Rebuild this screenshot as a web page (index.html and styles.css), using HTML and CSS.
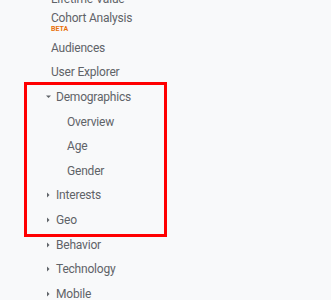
FILE: index.html
```html
<!DOCTYPE html>
<html lang="en">
<head>
  <meta charset="UTF-8" />
  <title>Audience Menu</title>
  <link rel="stylesheet" href="styles.css">
</head>
<body>
<nav class="side-nav">
  <div class="item">Lifetime Value</div>
  <div class="item item-beta">
    <span class="label">Cohort Analysis</span>
    <span class="beta">BETA</span>
  </div>
  <div class="item">Audiences</div>
  <div class="item">User Explorer</div>

  <div class="group highlight">
    <div class="item parent">
      <svg class="arrow" width="10" height="10" viewBox="0 0 10 10"><polygon points="0,3.5 5,3.5 2.5,6" /></svg>
      Demographics
    </div>
    <div class="item child">Overview</div>
    <div class="item child">Age</div>
    <div class="item child">Gender</div>
    <div class="item parent">
      <svg class="arrow" width="10" height="10" viewBox="0 0 10 10"><polygon points="1,2.5 3.5,5 1,7.5" /></svg>
      Interests
    </div>
    <div class="item parent">
      <svg class="arrow" width="10" height="10" viewBox="0 0 10 10"><polygon points="1,2.5 3.5,5 1,7.5" /></svg>
      Geo
    </div>
  </div>

  <div class="item parent">
    <svg class="arrow" width="10" height="10" viewBox="0 0 10 10"><polygon points="1,2.5 3.5,5 1,7.5" /></svg>
    Behavior
  </div>
  <div class="item parent">
    <svg class="arrow" width="10" height="10" viewBox="0 0 10 10"><polygon points="1,2.5 3.5,5 1,7.5" /></svg>
    Technology
  </div>
  <div class="item parent">
    <svg class="arrow" width="10" height="10" viewBox="0 0 10 10"><polygon points="1,2.5 3.5,5 1,7.5" /></svg>
    Mobile
  </div>
</nav>
</body>
</html>
```

FILE: styles.css
```css
html, body {
  margin: 0;
  padding: 0;
  height: 100%;
  overflow: hidden;
  background: #f8f9fa;
  font-family: Roboto, "Liberation Sans", sans-serif;
}

/* sidebar list */
.side-nav {
  display: flex;
  flex-direction: column;
  margin-top: -13.4px;
  color: #5f6368;
  font-size: 12px;
  letter-spacing: -0.2px;
}

.item {
  height: 24.6px;
  display: flex;
  align-items: center;
  padding-left: 51px;
  white-space: nowrap;
}

.item-beta {
  flex-direction: column;
  align-items: flex-start;
  justify-content: flex-start;
  height: 24.4px;
}
.item-beta .label {
  line-height: 14px;
}
.beta {
  font-size: 7px;
  font-weight: bold;
  letter-spacing: 0;
  line-height: 8px;
  color: #e8710a;
}

.parent {
  padding-left: 46px;
}
.arrow {
  flex: none;
  fill: #5f6368;
}
.child {
  padding-left: 67px;
}

/* red annotation box */
.group {
  position: relative;
}
.highlight::after {
  content: "";
  position: absolute;
  top: -2.8px;
  bottom: -4.6px;
  left: 24px;
  width: 137px;
  border: 3px solid #ff0000;
  pointer-events: none;
}
```
